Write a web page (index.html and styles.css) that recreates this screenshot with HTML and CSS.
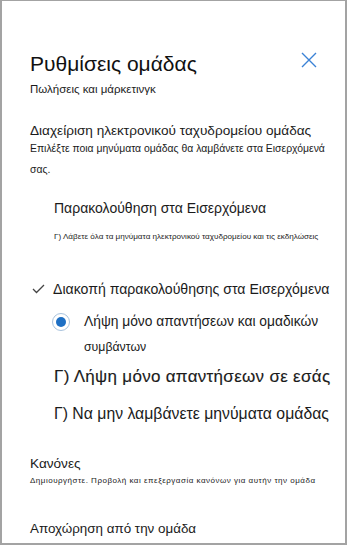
FILE: index.html
```html
<!DOCTYPE html>
<html lang="el">
<head>
    <meta charset="UTF-8">
    <meta name="viewport" content="width=device-width, initial-scale=1.0">
    <title>Ρυθμίσεις ομάδας</title>
    <link rel="stylesheet" href="styles.css">
</head>
<body>

    <!-- Settings panel -->
    <div class="panel">
        <div class="panel-header">
            <h1 class="panel-title">Ρυθμίσεις ομάδας</h1>
            <button class="close-btn" aria-label="Κλείσιμο">
                <svg width="16" height="16" viewBox="0 0 16 16">
                    <path d="M1 1 L15 15 M15 1 L1 15" stroke="#3b82d6" stroke-width="1.4" fill="none"/>
                </svg>
            </button>
        </div>
        <div class="panel-subtitle">Πωλήσεις και μάρκετινγκ</div>

        <!-- Group email -->
        <div class="section">
            <div class="section-title">Διαχείριση ηλεκτρονικού ταχυδρομείου ομάδας</div>
            <div class="section-desc">Επιλέξτε ποια μηνύματα ομάδας θα λαμβάνετε στα Εισερχόμενά σας.</div>
        </div>

        <div class="follow">
            <div class="follow-title">Παρακολούθηση στα Εισερχόμενα</div>
            <div class="follow-desc">Γ) Λάβετε όλα τα μηνύματα ηλεκτρονικού ταχυδρομείου και τις εκδηλώσεις</div>
        </div>

        <div class="option checked">
            <svg class="check" width="13" height="10" viewBox="0 0 13 10">
                <path d="M1 5 L4.5 8.5 L12 1" stroke="#444" stroke-width="1.3" fill="none"/>
            </svg>
            <span>Διακοπή παρακολούθησης στα Εισερχόμενα</span>
        </div>

        <div class="radio-row">
            <span class="radio"><span class="radio-dot"></span></span>
            <div class="radio-text">
                <div class="radio-label">Λήψη μόνο απαντήσεων και ομαδικών</div>
                <div class="radio-sub">συμβάντων</div>
            </div>
        </div>

        <div class="choice strong">Γ) Λήψη μόνο απαντήσεων σε εσάς</div>
        <div class="choice">Γ) Να μην λαμβάνετε μηνύματα ομάδας</div>

        <!-- Rules -->
        <div class="rules">
            <div class="rules-title">Κανόνες</div>
            <div class="rules-desc">Δημιουργήστε. Προβολή και επεξεργασία κανόνων για αυτήν την ομάδα</div>
        </div>

        <div class="leave">Αποχώρηση από την ομάδα</div>
    </div>

</body>
</html>
```

FILE: styles.css
```css
/* Basic resets */
body {
    margin: 0;
    padding: 0;
    background-color: #fff;
    font-family: "Liberation Sans", Arial, sans-serif;
    color: #1b1b1b;
}

/* Panel frame */
.panel {
    box-sizing: border-box;
    width: 347px;
    height: 545px;
    border: 2px solid #a3a3a3;
    border-top-width: 1px;
    padding: 0 10px 0 28px;
    overflow: hidden;
    white-space: nowrap;
}

/* Header */
.panel-header {
    display: flex;
    justify-content: space-between;
    align-items: flex-start;
    margin-top: 50px;
}

.panel-title {
    margin: 0;
    font-size: 21px;
    font-weight: 400;
    line-height: 26px;
    color: #111;
}

.close-btn {
    background: none;
    border: none;
    padding: 0;
    margin-top: 1px;
    margin-right: 18px;
    width: 16px;
    height: 16px;
    cursor: pointer;
}

.close-btn svg {
    display: block;
}

.panel-subtitle {
    font-size: 11.5px;
    margin-top: 4px;
    line-height: 16px;
}

/* Group email section */
.section {
    margin-top: 24px;
}

.section-title {
    font-size: 13.6px;
    line-height: 20px;
}

.section-desc {
    font-size: 10.4px;
    line-height: 21px;
    margin-top: -3px;
    padding-right: 4px;
    white-space: normal;
}

.follow {
    padding-left: 24px;
    margin-top: 18px;
}

.follow-title {
    font-size: 14px;
    line-height: 20px;
}

.follow-desc {
    font-size: 8.1px;
    line-height: 12px;
    margin-top: 13px;
}

/* Options */
.option {
    display: flex;
    align-items: center;
    gap: 8px;
    margin-top: 37px;
    font-size: 14.1px;
    line-height: 18px;
}

.check {
    margin-left: 2px;
    flex-shrink: 0;
}

.radio-row {
    display: flex;
    align-items: flex-start;
    gap: 14px;
    margin-top: 14px;
    padding-left: 22px;
}

.radio {
    box-sizing: border-box;
    width: 18px;
    height: 18px;
    border: 1.5px solid #a9c3dd;
    border-radius: 50%;
    display: flex;
    align-items: center;
    justify-content: center;
    margin-top: 1px;
    flex-shrink: 0;
}

.radio-dot {
    width: 10px;
    height: 10px;
    border-radius: 50%;
    background-color: #1d6fc4;
}

.radio-label {
    font-size: 13.8px;
    line-height: 20px;
}

.radio-sub {
    font-size: 12.3px;
    line-height: 16px;
    margin-top: 7px;
}

.choice {
    padding-left: 24px;
    font-size: 15.8px;
    line-height: 22px;
    margin-top: 15px;
}

.choice.strong {
    font-size: 17px;
    letter-spacing: 0.3px;
    -webkit-text-stroke: 0.15px #1b1b1b;
    margin-top: 11px;
}

/* Rules */
.rules {
    margin-top: 30px;
}

.rules-title {
    font-size: 13.6px;
    line-height: 18px;
}

.rules-desc {
    font-size: 8px;
    letter-spacing: 0.5px;
    line-height: 12px;
    margin-top: 2px;
}

.leave {
    font-size: 13.4px;
    line-height: 18px;
    margin-top: 33px;
}
```
